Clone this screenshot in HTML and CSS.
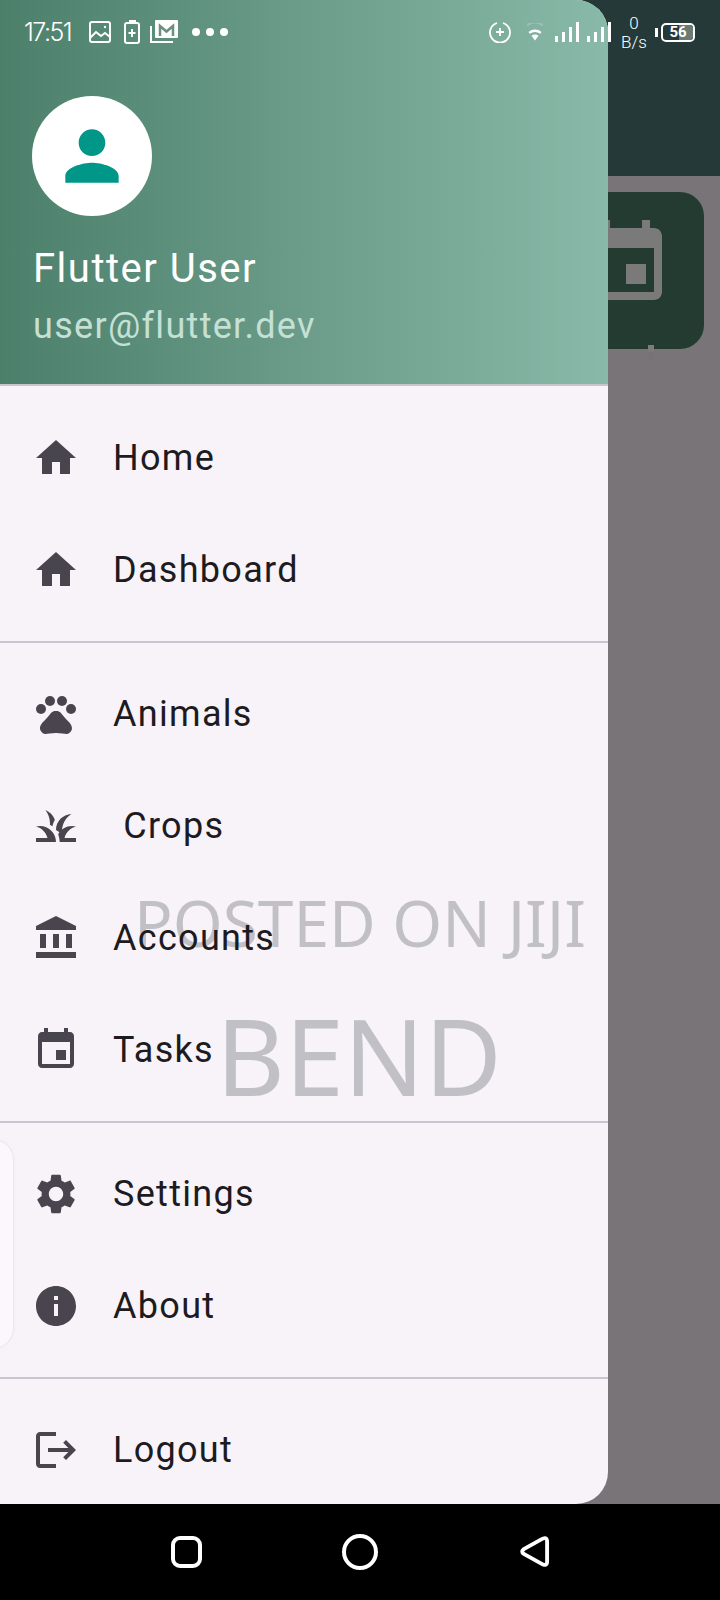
FILE: index.html
```html
<!DOCTYPE html>
<html lang="en">
<head>
    <meta charset="UTF-8">
    <meta name="viewport" content="width=device-width, initial-scale=1.0">
    <title>Farm App - Drawer</title>
    <link rel="stylesheet" href="styles.css">
</head>
<body>
    <div class="screen">
        <!-- Page behind the drawer -->
        <div class="page">
            <div class="app-bar"></div>
            <div class="page-row">
                <div class="tile">
                    <svg class="tile-icon" viewBox="0 0 24 24"><path d="M17 12h-5v5h5v-5zM16 1v2H8V1H6v2H5c-1.11 0-1.99.9-1.99 2L3 19c0 1.1.89 2 2 2h14c1.1 0 2-.9 2-2V5c0-1.1-.9-2-2-2h-1V1h-2zm3 18H5V8h14v11z"/></svg>
                </div>
            </div>
            <div class="tile-tick"></div>
        </div>

        <!-- Drawer -->
        <div class="drawer">
            <div class="drawer-header">
                <div class="avatar">
                    <svg class="avatar-icon" viewBox="0 0 24 24"><path d="M12 12c2.21 0 4-1.79 4-4s-1.79-4-4-4-4 1.79-4 4 1.79 4 4 4zm0 2c-2.67 0-8 1.34-8 4v2h16v-2c0-2.66-5.33-4-8-4z"/></svg>
                </div>
                <div class="user-name">Flutter User</div>
                <div class="user-email">user@flutter.dev</div>
            </div>

            <div class="drawer-list">
                <div class="watermark">
                    <div class="wm-small">POSTED ON JIJI</div>
                    <div class="wm-big">BEND</div>
                </div>

                <div class="item">
                    <svg class="item-icon" viewBox="0 0 24 24"><path d="M10 20v-6h4v6h5v-8h3L12 3 2 12h3v8z"/></svg>
                    <span>Home</span>
                </div>
                <div class="item">
                    <svg class="item-icon" viewBox="0 0 24 24"><path d="M10 20v-6h4v6h5v-8h3L12 3 2 12h3v8z"/></svg>
                    <span>Dashboard</span>
                </div>
                <div class="divider"></div>
                <div class="item">
                    <svg class="item-icon" viewBox="0 0 24 24"><circle cx="4.5" cy="9.5" r="2.5"/><circle cx="9" cy="5.5" r="2.5"/><circle cx="15" cy="5.5" r="2.5"/><circle cx="19.5" cy="9.5" r="2.5"/><path d="M17.34 14.86c-.87-1.02-1.6-1.89-2.48-2.91-.46-.54-1.05-1.08-1.75-1.32-.11-.04-.22-.07-.33-.09-.25-.04-.52-.04-.78-.04s-.53 0-.79.05c-.11.02-.22.05-.33.09-.7.24-1.28.78-1.75 1.32-.87 1.02-1.6 1.89-2.48 2.91-1.31 1.31-2.92 2.76-2.62 4.79.29 1.02 1.02 2.03 2.33 2.32.73.15 3.06-.44 5.54-.44h.18c2.48 0 4.81.58 5.54.44 1.31-.29 2.04-1.31 2.33-2.32.31-2.04-1.3-3.49-2.61-4.8z"/></svg>
                    <span>Animals</span>
                </div>
                <div class="item">
                    <svg class="item-icon" viewBox="0 0 24 24"><path d="M12 20H2v-2h5.75C7.02 15.19 4.81 12.99 2 12.26 2.64 12.1 3.31 12 4 12c4.42 0 8 3.58 8 8zm10-7.74c-.64-.16-1.31-.26-2-.26-2.94 0-5.5 1.59-6.89 3.95.43 1.27.66 2.61.76 4.05H22v-2h-5.75c.73-2.81 2.94-5.01 5.75-5.74zm-6.36-1.24c.78-2.09 2.23-3.84 4.09-5C15.44 6.16 12 9.67 12 14v.02c.95.54 1.84 1.2 2.66 1.98.2-1.99.51-3.73.98-4.98zm-4.22-2.17C10.58 6.66 8.88 4.89 6.7 4 8.14 5.86 9 8.18 9 10.71c0 .21-.03.41-.04.61.43.24.83.52 1.22.82.21-1.18.66-2.29 1.24-3.29z"/></svg>
                    <span>&nbsp;Crops</span>
                </div>
                <div class="item">
                    <svg class="item-icon" viewBox="0 0 24 24"><path d="M4 10h3v7H4zM10.5 10h3v7h-3zM2 19h20v3H2zM17 10h3v7h-3zM12 1L2 6v2h20V6z"/></svg>
                    <span>Accounts</span>
                </div>
                <div class="item">
                    <svg class="item-icon" viewBox="0 0 24 24"><path d="M17 12h-5v5h5v-5zM16 1v2H8V1H6v2H5c-1.11 0-1.99.9-1.99 2L3 19c0 1.1.89 2 2 2h14c1.1 0 2-.9 2-2V5c0-1.1-.9-2-2-2h-1V1h-2zm3 18H5V8h14v11z"/></svg>
                    <span>Tasks</span>
                </div>
                <div class="divider"></div>
                <div class="item">
                    <svg class="item-icon" viewBox="0 0 24 24"><path d="M19.14 12.94c.04-.3.06-.61.06-.94 0-.32-.02-.64-.07-.94l2.03-1.58c.18-.14.23-.41.12-.61l-1.92-3.32c-.12-.22-.37-.29-.59-.22l-2.39.96c-.5-.38-1.03-.7-1.62-.94l-.36-2.54c-.04-.24-.24-.41-.48-.41h-3.84c-.24 0-.43.17-.47.41l-.36 2.54c-.59.24-1.13.57-1.62.94l-2.39-.96c-.22-.08-.47 0-.59.22L2.74 8.87c-.12.21-.08.47.12.61l2.03 1.58c-.05.3-.09.63-.09.94s.02.64.07.94l-2.03 1.58c-.18.14-.23.41-.12.61l1.92 3.32c.12.22.37.29.59.22l2.39-.96c.5.38 1.03.7 1.62.94l.36 2.54c.05.24.24.41.48.41h3.84c.24 0 .44-.17.47-.41l.36-2.54c.59-.24 1.13-.56 1.62-.94l2.39.96c.22.08.47 0 .59-.22l1.92-3.32c.12-.22.07-.47-.12-.61l-2.01-1.58zM12 15.6c-1.98 0-3.6-1.62-3.6-3.6s1.62-3.6 3.6-3.6 3.6 1.62 3.6 3.6-1.62 3.6-3.6 3.6z"/></svg>
                    <span>Settings</span>
                </div>
                <div class="item">
                    <svg class="item-icon" viewBox="0 0 24 24"><path d="M12 2C6.48 2 2 6.48 2 12s4.48 10 10 10 10-4.48 10-10S17.52 2 12 2zm1 15h-2v-6h2v6zm0-8h-2V7h2v2z"/></svg>
                    <span>About</span>
                </div>
                <div class="divider"></div>
                <div class="item">
                    <svg class="item-icon" viewBox="0 0 24 24"><path d="M17 7l-1.41 1.41L18.17 11H8v2h10.17l-2.58 2.58L17 17l5-5zM4 5h8V3H4c-1.1 0-2 .9-2 2v14c0 1.1.9 2 2 2h8v-2H4V5z"/></svg>
                    <span>Logout</span>
                </div>

                <!-- Edge of the card peeking in from the left -->
                <div class="side-card"></div>
            </div>
        </div>

        <!-- Status bar -->
        <div class="status-bar">
            <div class="status-left">
                <span class="clock">17:51</span>
                <svg class="st-image" viewBox="0 0 22 22" fill="none" stroke="#fff" stroke-width="2"><rect x="1" y="1" width="20" height="20" rx="2"/><path d="M1 17l6-6 5 4 4-3 5 4"/><circle cx="16" cy="6" r="1.2" fill="#fff" stroke="none"/></svg>
                <svg class="st-battery" viewBox="0 0 16 24" fill="none" stroke="#fff" stroke-width="2"><path d="M5 1h6v2"/><rect x="1" y="3" width="14" height="20" rx="2"/><path d="M8 9v8M4.500 13h7"/></svg>
                <svg class="st-mail" viewBox="0 0 28 24"><path d="M1 6v16h22" fill="none" stroke="#fff" stroke-width="2"/><rect x="5" y="0" width="23" height="18" rx="1" fill="#fff"/><path d="M10 16V6l6.500 5.500L23 6v10" fill="none" stroke="#6b8f80" stroke-width="2.500"/></svg>
                <div class="dots"><i></i><i></i><i></i></div>
            </div>
            <div class="status-right">
                <svg class="st-sync" viewBox="0 0 22 22" fill="none" stroke="#fff" stroke-width="1.800"><path d="M14 2a10 10 0 1 1-6 0"/><path d="M11 7v8M7 11h8"/></svg>
                <svg class="st-wifi" viewBox="0 0 16 18"><path d="M0 2.500a12 12 0 0 1 16 0" fill="none" stroke="#fff" stroke-opacity=".2" stroke-width="2"/><path d="M1.500 9a10 10 0 0 1 13 0l-1.400 1.800a8 8 0 0 0-10.200 0z" fill="#fff"/><path d="M4.500 12.800a6 6 0 0 1 7 0L8 17.500z" fill="#fff"/></svg>
                <svg class="st-signal" viewBox="0 0 56 20" fill="#fff"><rect x="0" y="14" width="3" height="6"/><rect x="7" y="10" width="3" height="10"/><rect x="14" y="5" width="3" height="15"/><rect x="21" y="0" width="3" height="20"/><rect x="32" y="14" width="3" height="6"/><rect x="39" y="10" width="3" height="10"/><rect x="46" y="5" width="3" height="15"/><rect x="53" y="0" width="3" height="20"/></svg>
                <div class="net-speed"><span>0</span><span>B/s</span></div>
                <div class="battery">
                    <div class="battery-nub"></div>
                    <div class="battery-body"><div class="battery-level"></div><span>56</span></div>
                </div>
            </div>
        </div>

        <!-- Navigation bar -->
        <div class="nav-bar">
            <div class="nav-square"></div>
            <div class="nav-circle"></div>
            <svg class="nav-back" viewBox="0 0 32 34" fill="none" stroke="#fff" stroke-width="4"><path d="M23 4.500Q29 1 29 7V27Q29 33 23 29.500L5 19.500Q1.500 17 5 14.500Z"/></svg>
        </div>
    </div>
</body>
</html>
```

FILE: styles.css
```css
* {
    margin: 0;
    padding: 0;
    box-sizing: border-box;
}

body {
    background: #000;
    font-family: 'Roboto', sans-serif;
}

.screen {
    position: relative;
    width: 720px;
    height: 1600px;
    overflow: hidden;
    display: flex;
    flex-direction: column;
}

/* Page behind the drawer */
.page {
    height: 1504px;
    background: #787478;
    position: relative;
}

.app-bar {
    height: 176px;
    background: #253a38;
}

.page-row {
    display: flex;
    justify-content: flex-end;
    padding: 16px 16px 0 0;
}

.tile {
    width: 156px;
    height: 157px;
    background: #233b31;
    border-radius: 24px;
    display: flex;
    justify-content: center;
    padding-top: 24px;
}

.tile-icon {
    width: 96px;
    height: 96px;
    fill: #7a7a7a;
}

.tile-tick {
    position: absolute;
    left: 648px;
    top: 345px;
    width: 6px;
    height: 20px;
    background: linear-gradient(#7c7c7c 30%, #767376 35%, #787478);
}

/* Drawer */
.drawer {
    position: absolute;
    top: 0;
    left: 0;
    width: 608px;
    height: 1504px;
    background: #f7f3f9;
    border-radius: 0 32px 32px 0;
    overflow: hidden;
}

.drawer-header {
    height: 386px;
    padding: 96px 0 0 32px;
    background: linear-gradient(90deg, #4c806b, #89b9a8);
    border-bottom: 2px solid #c9c5cd;
}

.avatar {
    width: 120px;
    height: 120px;
    border-radius: 50%;
    background: #fff;
    display: flex;
    align-items: center;
    justify-content: center;
}

.avatar-icon {
    width: 80px;
    height: 80px;
    fill: #009688;
}

.user-name {
    margin-top: 27px;
    font-size: 40px;
    line-height: 52px;
    letter-spacing: 1.5px;
    color: #fff;
    padding-left: 1px;
}

.user-email {
    margin-top: 9px;
    font-size: 36px;
    line-height: 44px;
    letter-spacing: 1.3px;
    color: #c5e0d5;
    padding-left: 1px;
}

.drawer-list {
    position: relative;
    padding-top: 16px;
}

.item {
    position: relative;
    height: 112px;
    padding-left: 32px;
    display: flex;
    align-items: center;
    gap: 33px;
    font-size: 36px;
    letter-spacing: 1.3px;
    color: #1d1b20;
}

.item-icon {
    width: 48px;
    height: 48px;
    fill: #49454f;
    flex-shrink: 0;
}

.divider {
    height: 2px;
    margin: 15px 0;
    background: #cac4d0;
}

.watermark {
    position: absolute;
    left: 0;
    right: 0;
    top: 492px;
    font-family: 'Noto Sans', sans-serif;
    color: #c1c0c7;
}

.wm-small {
    font-size: 64px;
    line-height: 90px;
    margin-left: 134px;
}

.wm-big {
    font-size: 106px;
    line-height: 130px;
    margin-left: 216px;
    margin-top: 22px;
}

.side-card {
    position: absolute;
    left: -40px;
    top: 754px;
    width: 53px;
    height: 208px;
    background: #fbf8fd;
    border-radius: 20px;
    box-shadow: 0 0 3px rgba(0, 0, 0, 0.12);
}

/* Status bar */
.status-bar {
    position: absolute;
    top: 0;
    left: 0;
    width: 100%;
    height: 64px;
    padding: 0 25px 0 24px;
    display: flex;
    justify-content: space-between;
    align-items: center;
    color: #fff;
}

.status-left,
.status-right {
    display: flex;
    align-items: center;
}

.clock {
    font-family: 'Inter', sans-serif;
    font-weight: 300;
    font-size: 25px;
    letter-spacing: -1.5px;
    width: 65px;
}

.st-image {
    width: 22px;
    height: 22px;
}

.st-battery {
    width: 16px;
    height: 24px;
    margin-left: 13px;
}

.st-mail {
    width: 28px;
    height: 24px;
    margin-left: 10px;
}

.dots {
    display: flex;
    gap: 6px;
    margin-left: 14px;
}

.dots i {
    width: 8px;
    height: 8px;
    border-radius: 50%;
    background: #fff;
}

.st-sync {
    width: 22px;
    height: 22px;
}

.st-wifi {
    width: 16px;
    height: 18px;
    margin-left: 16px;
}

.st-signal {
    width: 56px;
    height: 20px;
    margin-left: 12px;
}

.net-speed {
    width: 30px;
    margin-left: 8px;
    padding-top: 2px;
    display: flex;
    flex-direction: column;
    align-items: center;
    font-weight: 300;
    font-size: 17px;
    line-height: 19px;
}

.battery {
    display: flex;
    align-items: center;
    gap: 3px;
    margin-left: 6px;
}

.battery-nub {
    width: 3px;
    height: 9px;
    background: #fff;
}

.battery-body {
    position: relative;
    width: 34px;
    height: 19px;
    border: 2px solid #fff;
    border-radius: 5px;
    display: flex;
    align-items: center;
    justify-content: center;
    font-weight: 700;
    font-size: 15px;
    overflow: hidden;
}

.battery-body span {
    position: relative;
}

.battery-level {
    position: absolute;
    top: 0;
    bottom: 0;
    right: 0;
    width: 14px;
    background: #6b7a74;
}

/* Navigation bar */
.nav-bar {
    position: absolute;
    left: 0;
    bottom: 0;
    width: 100%;
    height: 96px;
    background: #000;
}

.nav-square {
    position: absolute;
    left: 171px;
    top: 32px;
    width: 31px;
    height: 32px;
    border: 4px solid #fff;
    border-radius: 9px;
}

.nav-circle {
    position: absolute;
    left: 342px;
    top: 30px;
    width: 36px;
    height: 36px;
    border: 4px solid #fff;
    border-radius: 50%;
}

.nav-back {
    position: absolute;
    left: 519px;
    top: 31px;
    width: 31px;
    height: 33px;
}
```
